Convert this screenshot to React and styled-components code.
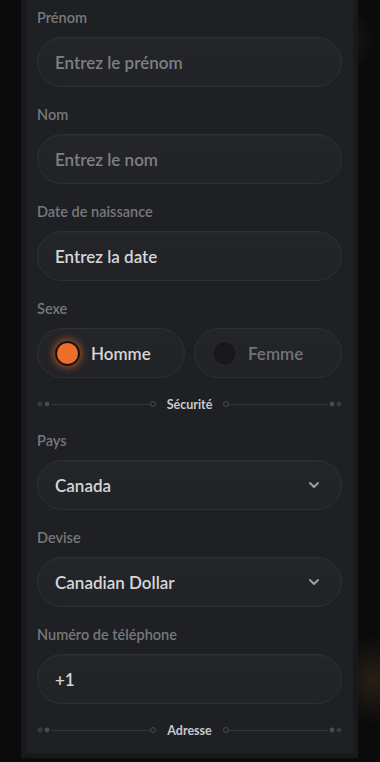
import React from 'react';
import styled, { createGlobalStyle } from 'styled-components';

const GlobalStyle = createGlobalStyle`
  html, body {
    margin: 0;
    padding: 0;
    background: #0b0b0c;
  }
  body {
    font-family: Lato, "Noto Sans", sans-serif;
  }
`;

const fields = [
  { label: 'Prénom', value: 'Entrez le prénom', muted: true },
  { label: 'Nom', value: 'Entrez le nom', muted: true },
  { label: 'Date de naissance', value: 'Entrez la date' },
];

const App = () => {
  return (
    <Backdrop>
      <GlobalStyle />
      <Panel>
        {fields.map(f => (
          <FieldGroup key={f.label}>
            <Label>{f.label}</Label>
            <Field>
              <FieldText $muted={f.muted}>{f.value}</FieldText>
            </Field>
          </FieldGroup>
        ))}

        <FieldGroup>
          <Label>Sexe</Label>
          <RadioRow>
            <RadioPill>
              <RadioDot $checked />
              <RadioText $checked>Homme</RadioText>
            </RadioPill>
            <RadioPill>
              <RadioDot />
              <RadioText>Femme</RadioText>
            </RadioPill>
          </RadioRow>
        </FieldGroup>

        <Divider title="Sécurité" />

        <FieldGroup>
          <Label>Pays</Label>
          <Field>
            <FieldText>Canada</FieldText>
            <Chevron />
          </Field>
        </FieldGroup>

        <FieldGroup>
          <Label>Devise</Label>
          <Field>
            <FieldText>Canadian Dollar</FieldText>
            <Chevron />
          </Field>
        </FieldGroup>

        <FieldGroup>
          <Label>Numéro de téléphone</Label>
          <Field>
            <FieldText>+1</FieldText>
          </Field>
        </FieldGroup>

        <Divider title="Adresse" />
      </Panel>
    </Backdrop>
  );
};

const Chevron = () => (
  <ChevronIcon width="14" height="14" viewBox="0 0 14 14">
    <path d="M3 5 L7 9 L11 5" fill="none" stroke="#9d9ea2" strokeWidth="2" strokeLinecap="round" strokeLinejoin="round" />
  </ChevronIcon>
);

const Divider = ({ title }) => (
  <DividerRow>
    <Ornament viewBox="0 0 14 8" width="14" height="8">
      <path d="M3 1 L6 4 L3 7 L0 4 Z" fill="#3a3b3f" />
      <circle cx="10" cy="4" r="2.4" fill="#4a4b4f" />
    </Ornament>
    <Line />
    <RingDot />
    <DividerTitle>{title}</DividerTitle>
    <RingDot />
    <Line />
    <Ornament viewBox="0 0 14 8" width="14" height="8">
      <circle cx="4" cy="4" r="2.4" fill="#4a4b4f" />
      <path d="M11 1 L14 4 L11 7 L8 4 Z" fill="#3a3b3f" />
    </Ornament>
  </DividerRow>
);

const Backdrop = styled.div`
  min-height: 762px;
  padding-left: 21px;
  background:
    radial-gradient(circle at 374px 680px, rgba(110, 85, 40, 0.28), transparent 45px),
    radial-gradient(circle at 345px 40px, rgba(40, 40, 44, 0.5), transparent 30px),
    #0b0b0c;
`;

const Panel = styled.div`
  box-sizing: border-box;
  width: 337px;
  height: 758px;
  background: #1f2023;
  border: 5px solid #19191b;
  border-top: none;
  padding: 9px 11px 0;
  display: flex;
  flex-direction: column;
`;

const FieldGroup = styled.div`
  display: flex;
  flex-direction: column;
  margin-bottom: 19px;
`;

const Label = styled.div`
  font-size: 14.5px;
  font-weight: 600;
  color: #77787c;
  height: 18px;
  line-height: 18px;
  margin-bottom: 10px;
`;

const Field = styled.div`
  box-sizing: border-box;
  height: 50px;
  border-radius: 25px;
  border: 1px solid #2f3034;
  background: linear-gradient(180deg, #242529 0%, #222327 100%);
  box-shadow: inset 0 1px 0 rgba(255, 255, 255, 0.02);
  display: flex;
  align-items: center;
  justify-content: space-between;
  padding: 0 20px 0 17px;
`;

const FieldText = styled.span`
  font-size: 17px;
  font-weight: 600;
  color: ${p => (p.$muted ? '#7f8084' : '#d6d6d8')};
`;

const ChevronIcon = styled.svg`
  display: block;
`;

const RadioRow = styled.div`
  display: grid;
  grid-template-columns: 1fr 1fr;
  gap: 9px;
`;

const RadioPill = styled.div`
  box-sizing: border-box;
  height: 50px;
  border-radius: 25px;
  border: 1px solid #2f3034;
  background: linear-gradient(180deg, #242529 0%, #222327 100%);
  display: flex;
  align-items: center;
  gap: 11px;
  padding-left: 17px;
`;

const RadioDot = styled.span`
  box-sizing: border-box;
  width: 25px;
  height: 25px;
  border-radius: 50%;
  background: ${p => (p.$checked ? '#ec6f2b' : '#19191c')};
  border: ${p => (p.$checked ? '2.5px solid #141416' : '1.5px solid #2c2d31')};
  box-shadow: ${p => (p.$checked ? '0 0 7px 2px rgba(236, 111, 43, 0.55)' : 'none')};
`;

const RadioText = styled.span`
  font-size: 17px;
  font-weight: 600;
  color: ${p => (p.$checked ? '#d6d6d8' : '#727377')};
`;

const DividerRow = styled.div`
  display: flex;
  align-items: center;
  height: 12px;
  margin: 1px 0 22px;
`;

const Ornament = styled.svg`
  flex: none;
  display: block;
`;

const Line = styled.span`
  flex: 1;
  height: 1px;
  background: #36373b;
`;

const RingDot = styled.span`
  flex: none;
  box-sizing: border-box;
  width: 6px;
  height: 6px;
  border-radius: 50%;
  border: 1px solid #4a4b4f;
`;

const DividerTitle = styled.span`
  font-size: 12.5px;
  font-weight: 700;
  color: #c9c9cc;
  padding: 0 11px;
`;

export default App;
